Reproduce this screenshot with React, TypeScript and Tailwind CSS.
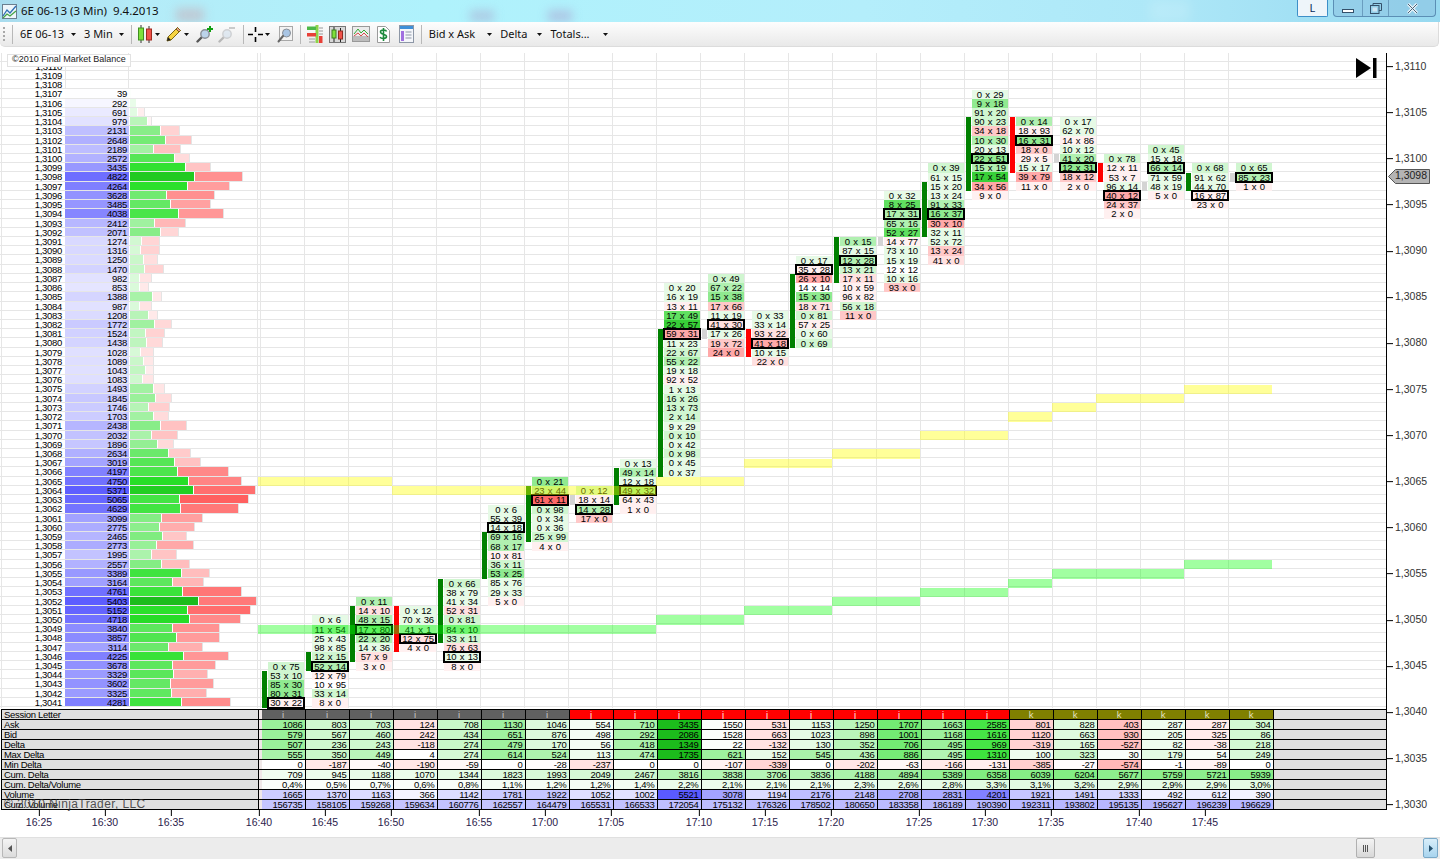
import type React from 'react'

const ROW = 9.227
const TOP_PRICE = 3111
const rowTop = (price: number) => (TOP_PRICE - price) * ROW

// price, volume, end of green bar, end of red bar (measured from the ladder)
const ladder: [number, number, number, number][] = [
  [3107, 39, 392, 392], [3106, 292, 407, 407], [3105, 691, 412, 436], [3104, 979, 442, 457],
  [3103, 2131, 480, 541], [3102, 2648, 495, 577], [3101, 2189, 459, 543], [3100, 2572, 522, 571],
  [3099, 3435, 555, 634], [3098, 4822, 582, 729], [3097, 4264, 561, 691], [3096, 3628, 498, 645],
  [3095, 3485, 510, 634], [3094, 4038, 534, 672], [3093, 2412, 462, 558], [3092, 2071, 480, 536],
  [3091, 1274, 424, 481], [3090, 1316, 421, 481], [3089, 1250, 430, 475], [3088, 1470, 433, 493],
  [3087, 982, 418, 457], [3086, 853, 418, 448], [3085, 1388, 456, 487], [3084, 987, 418, 457],
  [3083, 1208, 444, 475], [3082, 1772, 462, 515], [3081, 1524, 436, 496], [3080, 1438, 439, 491],
  [3079, 1028, 420, 461], [3078, 1089, 430, 463], [3077, 1043, 436, 463], [3076, 1083, 427, 463],
  [3075, 1493, 460, 496], [3074, 1845, 466, 516], [3073, 1746, 445, 511], [3072, 1703, 460, 509],
  [3071, 2438, 480, 562], [3070, 2032, 454, 534], [3069, 1896, 471, 523], [3068, 2634, 504, 574],
  [3067, 3019, 522, 604], [3066, 4197, 531, 688], [3065, 4750, 565, 727], [3064, 5371, 579, 768],
  [3063, 5065, 538, 747], [3062, 4629, 540, 718], [3061, 3099, 483, 610], [3060, 2775, 477, 586],
  [3059, 2465, 486, 562], [3058, 2773, 468, 583], [3057, 1995, 453, 532], [3056, 2557, 483, 571],
  [3055, 3389, 543, 631], [3054, 3164, 516, 613], [3053, 4761, 546, 726], [3052, 5403, 594, 771],
  [3051, 5152, 561, 753], [3050, 4718, 567, 723], [3049, 3840, 516, 660], [3048, 3857, 528, 660],
  [3047, 3114, 504, 610], [3046, 4225, 549, 688], [3045, 3678, 516, 648], [3044, 3329, 519, 624],
  [3043, 3602, 510, 642], [3042, 3325, 513, 621], [3041, 4281, 543, 693],
]

type Column = {
  top: number
  bar: [number, number, 'g' | 'r' | 'x']
  box: number
  cells: [string, number][]
}

const columns: Column[] = [
  { top: 3045, bar: [3044, 3041, 'g'], box: 4, cells: [['0 x 75', 2], ['53 x 10', 2], ['85 x 30', 4], ['80 x 31', 4], ['30 x 22', -1]] },
  { top: 3050, bar: [3046, 3045, 'g'], box: 5, cells: [['0 x 6', 1], ['11 x 54', 3], ['25 x 43', 1], ['98 x 85', 1], ['12 x 15', 2], ['52 x 14', 3], ['12 x 79', -1], ['10 x 95', 0], ['33 x 14', 2], ['8 x 0', -1]] },
  { top: 3052, bar: [3051, 3046, 'g'], box: 3, cells: [['0 x 11', 3], ['14 x 10', -2], ['48 x 15', 3], ['17 x 80', 4], ['22 x 20', 3], ['14 x 36', 1], ['57 x 9', -2], ['3 x 0', -1]] },
  { top: 3051, bar: [3051, 3047, 'r'], box: 3, cells: [['0 x 12', 1], ['70 x 36', 1], ['41 x 1', 2], ['12 x 75', -2], ['4 x 0', -1]] },
  { top: 3054, bar: [3054, 3048, 'g'], box: 8, cells: [['0 x 66', 2], ['38 x 79', 1], ['41 x 34', 1], ['52 x 31', -2], ['0 x 81', 2], ['84 x 10', 3], ['33 x 11', 2], ['76 x 63', -2], ['10 x 13', 1], ['8 x 0', -1]] },
  { top: 3062, bar: [3059, 3055, 'g'], box: 2, cells: [['0 x 6', 1], ['55 x 39', 1], ['14 x 18', 1], ['69 x 16', 3], ['68 x 17', 3], ['10 x 81', -1], ['36 x 11', 2], ['53 x 25', 4], ['85 x 76', 1], ['29 x 33', 1], ['5 x 0', -1]] },
  { top: 3065, bar: [3064, 3059, 'g'], box: 2, cells: [['0 x 21', 4], ['23 x 44', 3], ['61 x 11', -5], ['0 x 98', 2], ['0 x 34', 1], ['0 x 36', 1], ['25 x 99', 2], ['4 x 0', -1]] },
  { top: 3064, bar: [3063, 3063, 'x'], box: 2, cells: [['0 x 12', 2], ['18 x 14', -1], ['14 x 28', 3], ['17 x 0', -3]] },
  { top: 3067, bar: [3066, 3063, 'g'], box: 3, cells: [['0 x 13', 1], ['49 x 14', 3], ['12 x 18', 1], ['49 x 32', 4], ['64 x 43', -1], ['1 x 0', -1]] },
  { top: 3086, bar: [3081, 3066, 'g'], box: 5, cells: [['0 x 20', 1], ['16 x 19', 1], ['13 x 11', -1], ['17 x 49', 5], ['22 x 57', 6], ['59 x 31', -4], ['11 x 23', 1], ['22 x 67', 2], ['55 x 22', 3], ['19 x 18', 1], ['92 x 52', -1], ['1 x 13', 1], ['16 x 26', 2], ['13 x 73', 2], ['2 x 14', 2], ['9 x 29', 1], ['0 x 10', 2], ['0 x 42', 1], ['0 x 98', 2], ['0 x 45', 1], ['0 x 37', 1]] },
  { top: 3087, bar: [3081, 3081, 'x'], box: 5, cells: [['0 x 49', 2], ['67 x 22', 3], ['15 x 38', 4], ['17 x 66', -3], ['11 x 19', 1], ['41 x 30', -2], ['17 x 26', 1], ['19 x 72', -3], ['24 x 0', -4]] },
  { top: 3083, bar: [3081, 3079, 'r'], box: 3, cells: [['0 x 33', 1], ['33 x 14', 1], ['93 x 22', -2], ['41 x 18', -4], ['10 x 15', 1], ['22 x 0', -2]] },
  { top: 3089, bar: [3087, 3080, 'g'], box: 1, cells: [['0 x 17', 1], ['35 x 28', -1], ['26 x 10', -4], ['14 x 14', 0], ['15 x 30', 4], ['18 x 71', -2], ['0 x 81', 2], ['57 x 25', -1], ['0 x 60', 1], ['0 x 69', 2]] },
  { top: 3091, bar: [3091, 3087, 'g'], box: 2, cells: [['0 x 15', 3], ['87 x 15', 1], ['12 x 28', 3], ['13 x 21', 2], ['17 x 11', -2], ['10 x 59', -1], ['96 x 82', -1], ['56 x 18', 2], ['11 x 0', -3]] },
  { top: 3096, bar: [3091, 3091, 'x'], box: 2, cells: [['0 x 32', 1], ['8 x 25', 5], ['17 x 31', 3], ['65 x 16', 3], ['52 x 27', 5], ['14 x 77', -1], ['73 x 10', 1], ['15 x 19', 1], ['12 x 12', 0], ['10 x 16', 1], ['93 x 0', -3]] },
  { top: 3099, bar: [3097, 3092, 'g'], box: 5, cells: [['0 x 39', 2], ['61 x 15', 1], ['15 x 20', 1], ['13 x 24', 1], ['91 x 33', 3], ['16 x 37', 4], ['30 x 10', -4], ['32 x 11', 1], ['52 x 72', 1], ['13 x 24', -3], ['41 x 0', -2]] },
  { top: 3107, bar: [3104, 3097, 'g'], box: 7, cells: [['0 x 29', 1], ['9 x 18', 4], ['91 x 20', 2], ['90 x 23', 2], ['34 x 18', -3], ['10 x 30', 3], ['20 x 13', 1], ['22 x 51', 4], ['15 x 19', 3], ['17 x 54', 6], ['34 x 56', -4], ['9 x 0', -1]] },
  { top: 3104, bar: [3104, 3099, 'r'], box: 2, cells: [['0 x 14', 3], ['18 x 93', -1], ['16 x 31', 4], ['18 x 0', -3], ['29 x 5', -1], ['15 x 17', 1], ['39 x 79', -4], ['11 x 0', -1]] },
  { top: 3104, bar: [3100, 3100, 'x'], box: 5, cells: [['0 x 17', 1], ['62 x 70', 1], ['14 x 86', -1], ['10 x 12', 1], ['41 x 20', 3], ['12 x 31', 4], ['18 x 12', -3], ['2 x 0', -1]] },
  { top: 3100, bar: [3099, 3098, 'r'], box: 4, cells: [['0 x 78', 2], ['12 x 11', -1], ['53 x 7', -1], ['96 x 14', 1], ['40 x 12', -4], ['24 x 37', -3], ['2 x 0', -1]] },
  { top: 3101, bar: [3097, 3097, 'x'], box: 2, cells: [['0 x 45', 2], ['15 x 18', 1], ['66 x 14', 3], ['71 x 59', 1], ['48 x 19', 1], ['5 x 0', -1]] },
  { top: 3099, bar: [3098, 3097, 'g'], box: 3, cells: [['0 x 68', 2], ['91 x 62', 1], ['44 x 70', 1], ['16 x 87', -1], ['23 x 0', -1]] },
  { top: 3099, bar: [3098, 3098, 'x'], box: 1, cells: [['0 x 65', 2], ['85 x 23', 3], ['1 x 0', -1]] },
]

const shadeClass: Record<string, string> = {
  '-5': 'bg-[#ff6868]',
  '-4': 'bg-[#ffa8a8]',
  '-3': 'bg-[#ffc8c8]',
  '-2': 'bg-[#ffe0e0]',
  '-1': 'bg-[#fff0f0]',
  '0': 'bg-white',
  '1': 'bg-[#e6fae6]',
  '2': 'bg-[#d0f6d0]',
  '3': 'bg-[#b0f0b0]',
  '4': 'bg-[#90ea90]',
  '5': 'bg-[#60e060]',
  '6': 'bg-[#38d038]',
}

const barClass = { g: 'bg-[#008000]', r: 'bg-[#ff0000]', x: 'bg-[#d4d4d4]' }

const bands: [number, number, number, 'y' | 'g'][] = [
  [258, 392, 3065, 'y'], [392, 656, 3064, 'y'], [656, 744, 3065, 'y'], [744, 832, 3067, 'y'],
  [832, 920, 3068, 'y'], [920, 1008, 3070, 'y'], [1008, 1052, 3072, 'y'], [1052, 1096, 3073, 'y'],
  [1096, 1184, 3074, 'y'], [1184, 1272, 3075, 'y'],
  [258, 656, 3049, 'g'], [656, 744, 3050, 'g'], [744, 832, 3051, 'g'], [832, 920, 3052, 'g'],
  [920, 1008, 3053, 'g'], [1008, 1052, 3054, 'g'], [1052, 1184, 3055, 'g'], [1184, 1272, 3056, 'g'],
]

const ask = [1086, 803, 703, 124, 708, 1130, 1046, 554, 710, 3435, 1550, 531, 1153, 1250, 1707, 1663, 2585, 801, 828, 403, 287, 287, 304]
const bid = [579, 567, 460, 242, 434, 651, 876, 498, 292, 2086, 1528, 663, 1023, 898, 1001, 1168, 1616, 1120, 663, 930, 205, 325, 86]
const delta = [507, 236, 243, -118, 274, 479, 170, 56, 418, 1349, 22, -132, 130, 352, 706, 495, 969, -319, 165, -527, 82, -38, 218]
const maxDelta = [555, 350, 449, 4, 274, 614, 524, 113, 474, 1735, 621, 152, 545, 436, 886, 495, 1310, 100, 323, 30, 179, 54, 249]
const minDelta = [0, -187, -40, -190, -59, 0, -28, -237, 0, 0, -107, -339, 0, -202, -63, -166, -131, -385, -27, -574, -1, -89, 0]
const cumDelta = [709, 945, 1188, 1070, 1344, 1823, 1993, 2049, 2467, 3816, 3838, 3706, 3836, 4188, 4894, 5389, 6358, 6039, 6204, 5677, 5759, 5721, 5939]
const cumPct = [0.4, 0.5, 0.7, 0.6, 0.8, 1.1, 1.2, 1.2, 1.4, 2.2, 2.1, 2.1, 2.1, 2.3, 2.6, 2.8, 3.3, 3.1, 3.2, 2.9, 2.9, 2.9, 3.0]
const volume = [1665, 1370, 1163, 366, 1142, 1781, 1922, 1052, 1002, 5521, 3078, 1194, 2176, 2148, 2708, 2831, 4201, 1921, 1491, 1333, 492, 612, 390]
const cumVolume = [156735, 158105, 159268, 159634, 160776, 162557, 164479, 165531, 166533, 172054, 175132, 176326, 178502, 180650, 183358, 186189, 190390, 192311, 193802, 195135, 195627, 196239, 196629]

function green(t: number) {
  const v = Math.min(Math.max(t, 0), 1)
  let r: number
  let g: number
  if (v < 0.5) {
    r = 255 - 135 * (v / 0.5)
    g = 255 - 20 * (v / 0.5)
  } else if (v < 0.85) {
    r = 120 - 80 * ((v - 0.5) / 0.35)
    g = 235 - 11 * ((v - 0.5) / 0.35)
  } else {
    r = 40 - 12 * ((v - 0.85) / 0.15)
    g = 224 - 36 * ((v - 0.85) / 0.15)
  }
  return `rgb(${r}, ${g}, ${r})`
}
const pink = (c: number) => `rgb(255, ${c}, ${c})`
const blue = (c: number) => `rgb(${c}, ${c}, 255)`
const volumeBlue = (v: number) => blue(255 - 165 * Math.min(v / 5500, 1))
const deltaColor = (d: number) => (d >= 0 ? green(d / 1349) : pink(238 - Math.abs(d) * 0.09))

type Row = { label: string; values: string[]; colors: string[] }

const tableRows: Row[] = [
  { label: 'Ask', values: ask.map(String), colors: delta.map(deltaColor) },
  { label: 'Bid', values: bid.map(String), colors: delta.map(deltaColor) },
  { label: 'Delta', values: delta.map(String), colors: delta.map(deltaColor) },
  { label: 'Max Delta', values: maxDelta.map(String), colors: maxDelta.map((v) => green(v / 1735)) },
  { label: 'Min Delta', values: minDelta.map(String), colors: minDelta.map((v) => pink(255 + v * 0.124)) },
  { label: 'Cum. Delta', values: cumDelta.map(String), colors: cumDelta.map((v) => green(v / 13500)) },
  {
    label: 'Cum. Delta/Volume',
    values: cumPct.map((v) => `${v.toFixed(1).replace('.', ',')}%`),
    colors: cumPct.map((v) => green(v / 30)),
  },
  { label: 'Volume', values: volume.map(String), colors: volume.map(volumeBlue) },
  { label: 'Cum. Volume', values: cumVolume.map(String), colors: cumVolume.map((v) => blue(255 - v / 2700)) },
]

const timeTicks: [string, number][] = [
  ['16:25', 39], ['16:30', 105], ['16:35', 171], ['16:40', 259], ['16:45', 325], ['16:50', 391],
  ['16:55', 479], ['17:00', 545], ['17:05', 611], ['17:10', 699], ['17:15', 765], ['17:20', 831],
  ['17:25', 919], ['17:30', 985], ['17:35', 1051], ['17:40', 1139], ['17:45', 1205],
]

const axisLabels = ['1,3110', '1,3105', '1,3100', '1,3095', '1,3090', '1,3085', '1,3080', '1,3075', '1,3070', '1,3065', '1,3060', '1,3055', '1,3050', '1,3045', '1,3040', '1,3035', '1,3030']

function Caret() {
  return (
    <svg width="5" height="3" viewBox="0 0 5 3" className="shrink-0">
      <path d="M0 0h5L2.5 3z" fill="#111" />
    </svg>
  )
}

function Sep() {
  return <div className="h-[19px] w-px shrink-0 bg-[#b8b8b8]" />
}

function AppIcon() {
  return (
    <svg width="15" height="15" viewBox="0 0 15 15" className="shrink-0">
      <rect x="0.5" y="0.5" width="14" height="14" fill="#eef6fb" stroke="#6b7f90" />
      <path d="M1 12 5 6l3 3 6-7" fill="none" stroke="#2f6fb5" strokeWidth="1.3" />
      <path d="M1 14 5 10l3 2 6-5" fill="none" stroke="#46a546" strokeWidth="1.3" />
    </svg>
  )
}

function CandlesIcon() {
  return (
    <svg width="16" height="18" viewBox="0 0 16 18" className="shrink-0">
      <path d="M4 0v18M12 1v17" stroke="#333" />
      <rect x="1.5" y="3" width="5" height="12" fill="#7ee03a" stroke="#3f8f20" />
      <rect x="9.5" y="4" width="5" height="11" fill="#f0524a" stroke="#a02a20" />
    </svg>
  )
}

function PencilIcon() {
  return (
    <svg width="16" height="16" viewBox="0 0 16 16" className="shrink-0">
      <path d="M11.5 1.5 14.5 4.5 5 14l-4 1 1-4z" fill="#f7d443" stroke="#7d6512" />
      <path d="M1 15l1-4 3 3z" fill="#222" />
      <path d="M11.5 1.5 14.5 4.5 13 6 10 3z" fill="#e89a8a" stroke="#7d6512" />
    </svg>
  )
}

function ZoomGlass({ plus, faded }: { plus?: boolean; faded?: boolean }) {
  return (
    <svg width="17" height="17" viewBox="0 0 17 17" className={faded ? 'shrink-0 opacity-35' : 'shrink-0'}>
      <path d="M6.5 10.5 1.5 15.5" stroke="#555" strokeWidth="2.4" strokeLinecap="round" />
      <circle cx="9" cy="8" r="4.2" fill="#bcd3ea" stroke="#8a8f96" strokeWidth="1.4" />
      {plus ? <path d="M14 0v6M11 3h6" stroke="#10a010" strokeWidth="2" /> : <path d="M11 2h6" stroke="#777" strokeWidth="2" />}
    </svg>
  )
}

function CrossIcon() {
  return (
    <svg width="15" height="15" viewBox="0 0 15 15" className="shrink-0">
      <path d="M7.5 0v5M7.5 10v5M0 7.5h5M10 7.5h5" stroke="#000" strokeWidth="1.6" />
    </svg>
  )
}

function SearchBoxIcon() {
  return (
    <svg width="16" height="17" viewBox="0 0 16 17" className="shrink-0">
      <rect x="2.5" y="0.5" width="13" height="14" fill="#f3f3f3" stroke="#a8a8a8" />
      <circle cx="9.5" cy="7" r="4" fill="#a9c5e4" stroke="#8a8f96" />
      <path d="M6 10 1.5 15.5" stroke="#666" strokeWidth="2" strokeLinecap="round" />
    </svg>
  )
}

function LadderIcon() {
  return (
    <svg width="17" height="18" viewBox="0 0 17 18" className="shrink-0">
      <rect x="9.5" y="0" width="3" height="18" fill="#8dd34a" />
      <rect x="1" y="1.5" width="9" height="3.5" fill="#4cb848" />
      <rect x="1" y="8" width="9" height="3.5" fill="#e84038" />
      <rect x="13" y="11" width="3.5" height="7" fill="#e84038" />
      <path d="M13 3h4M13 6h4M13 9h4M3 14h6M3 17h6" stroke="#9a9a9a" />
    </svg>
  )
}

function BoxedCandlesIcon() {
  return (
    <svg width="17" height="17" viewBox="0 0 17 17" className="shrink-0">
      <rect x="0.5" y="0.5" width="16" height="16" fill="#d8d8d8" stroke="#777" />
      <path d="M5 1v15M11.5 2v14" stroke="#222" />
      <rect x="3" y="4" width="4" height="8" fill="#7ee03a" stroke="#3f7f20" />
      <rect x="9.5" y="5" width="4" height="8" fill="#f0524a" stroke="#902a20" />
    </svg>
  )
}

function LinesIcon() {
  return (
    <svg width="18" height="16" viewBox="0 0 18 16" className="shrink-0">
      <rect x="0.5" y="0.5" width="17" height="15" fill="#ececec" stroke="#999" />
      <path d="M1 15V10h16v5z" fill="#bdbdbd" />
      <path d="M2 8 6 3l3 4 3-3 4 4" fill="none" stroke="#36a836" />
      <path d="M2 10 6 7l3 3 3-3 4 4" fill="none" stroke="#d84a4a" />
    </svg>
  )
}

function MoneyIcon() {
  return (
    <svg width="13" height="17" viewBox="0 0 13 17" className="shrink-0">
      <path d="M.5.5h8l4 4v12H.5z" fill="#fff" stroke="#9a9a9a" />
      <path d="M9.5 5.5c-.5-2-6-2-6 .5s6 2 6 4.5-5.5 2.5-6.5.5M6.5 2v13" fill="none" stroke="#1c8a3c" strokeWidth="1.6" />
    </svg>
  )
}

function TableDocIcon() {
  return (
    <svg width="15" height="18" viewBox="0 0 15 18" className="shrink-0">
      <rect x="0.5" y="0.5" width="14" height="17" fill="#f4f6fa" stroke="#8d97a6" />
      <rect x="1" y="1" width="13" height="3" fill="#3f8fd8" />
      <rect x="2" y="6" width="3" height="10" fill="#a070e0" />
      <path d="M6.5 7h6M6.5 10h6M6.5 13h6" stroke="#8d97a6" />
    </svg>
  )
}

function TitleBar() {
  return (
    <div className="relative flex h-[22px] shrink-0 items-center overflow-hidden bg-[linear-gradient(90deg,#a9dcee_0%,#b4ecf8_10%,#aff2fc_30%,#b4eefb_60%,#aee8f8_80%,#97d9f0_100%)] pl-[2px] tracking-normal">
      <div className="absolute top-[8px] left-[176px] h-[14px] w-[28px] bg-[#c9a9b4]/50 blur-[5px]" />
      <div className="absolute top-[10px] left-[470px] h-[12px] w-[24px] bg-[#a9a9d0]/50 blur-[5px]" />
      <div className="absolute top-[10px] left-[548px] h-[12px] w-[24px] bg-[#a9a0d0]/50 blur-[5px]" />
      <div className="absolute top-0 left-[1150px] h-[22px] w-[40px] bg-white/15 blur-[6px]" />
      <AppIcon />
      <span className="relative ml-[4px] font-['Noto_Sans',sans-serif] text-[11.5px] whitespace-pre text-[#111]">
        6E 06-13 (3 Min)  9.4.2013
      </span>
      <div className="relative ml-auto flex h-full items-start">
        <div className="flex h-[17px] w-[31px] items-center justify-center rounded-b-[2px] border border-t-0 border-[#3d8fc8] bg-[#eef5fa] font-['Noto_Sans',sans-serif] text-[11px] text-[#0a2a5a]">
          L
        </div>
        <div className="mr-[4px] ml-[5px] flex h-[17px] rounded-b-[4px] border border-t-0 border-[#5b8fb5] bg-[#8ec4e2]/60">
          <div className="flex w-[29px] items-end justify-center border-r border-[#6a9dbf] pb-[3px]">
            <div className="h-[4px] w-[12px] border border-[#34506a] bg-white" />
          </div>
          <div className="flex w-[26px] items-center justify-center border-r border-[#6a9dbf]">
            <svg width="12" height="11" viewBox="0 0 12 11">
              <path d="M3 2.5V.5h8.5v7H9" fill="none" stroke="#34506a" />
              <rect x="0.5" y="2.5" width="8.5" height="8" fill="none" stroke="#34506a" />
              <rect x="2.5" y="4.5" width="4.5" height="4" fill="#cfe6f4" />
            </svg>
          </div>
          <div className="flex w-[46px] items-center justify-center">
            <svg width="11" height="11" viewBox="0 0 11 11">
              <path d="M1 1l9 9M10 1l-9 9" stroke="#e8f2f8" strokeWidth="3" />
              <path d="M1 1l9 9M10 1l-9 9" stroke="#4a6478" strokeWidth="1" />
            </svg>
          </div>
        </div>
      </div>
    </div>
  )
}

function Toolbar() {
  return (
    <div className="mr-[1px] flex h-[25px] shrink-0 items-center rounded-b-[5px] border-r border-b border-[#dcdcdc] bg-[linear-gradient(180deg,#fdfdfd,#e9e9e9)] pl-[3px] font-['Noto_Sans',sans-serif] text-[11px] tracking-normal text-[#111]">
      <div className="flex h-[14px] w-[2px] flex-col justify-between">
        {[0, 1, 2, 3].map((i) => (
          <div key={i} className="h-[2px] w-[2px] bg-[#a8a8a8]" />
        ))}
      </div>
      <div className="ml-[7px]">
        <Sep />
      </div>
      <span className="ml-[7px]">6E 06-13</span>
      <div className="ml-[7px]">
        <Caret />
      </div>
      <span className="ml-[8px]">3 Min</span>
      <div className="ml-[6px]">
        <Caret />
      </div>
      <div className="ml-[7px]">
        <Sep />
      </div>
      <div className="ml-[5px]">
        <CandlesIcon />
      </div>
      <div className="ml-[2px]">
        <Caret />
      </div>
      <div className="ml-[6px]">
        <PencilIcon />
      </div>
      <div className="ml-[2px]">
        <Caret />
      </div>
      <div className="ml-[7px]">
        <ZoomGlass plus />
      </div>
      <div className="ml-[5px]">
        <ZoomGlass faded />
      </div>
      <div className="ml-[8px]">
        <Sep />
      </div>
      <div className="ml-[4px]">
        <CrossIcon />
      </div>
      <div className="ml-[2px]">
        <Caret />
      </div>
      <div className="ml-[7px]">
        <SearchBoxIcon />
      </div>
      <div className="ml-[7px]">
        <Sep />
      </div>
      <div className="ml-[5px]">
        <LadderIcon />
      </div>
      <div className="ml-[6px]">
        <BoxedCandlesIcon />
      </div>
      <div className="ml-[6px]">
        <LinesIcon />
      </div>
      <div className="ml-[7px]">
        <MoneyIcon />
      </div>
      <div className="ml-[9px]">
        <TableDocIcon />
      </div>
      <div className="ml-[7px]">
        <Sep />
      </div>
      <span className="ml-[7px]">Bid x Ask</span>
      <div className="ml-[12px]">
        <Caret />
      </div>
      <span className="ml-[8px]">Delta</span>
      <div className="ml-[10px]">
        <Caret />
      </div>
      <span className="ml-[8px]">Totals...</span>
      <div className="ml-[13px]">
        <Caret />
      </div>
    </div>
  )
}

function Ladder() {
  const rows = [3111, 3110, 3109, 3108]
  return (
    <div className="ml-px flex w-[257px] shrink-0 flex-col border-r border-l border-[#e6e6e6]">
      {rows.map((p) => (
        <div key={p} className="flex h-[9.227px] leading-[9.227px]">
          <div className="w-[63px] pr-[3px] text-right">{p === 3111 ? '' : `1,${p}`}</div>
          <div className="w-[64px] border-x border-[#e6e6e6]" />
        </div>
      ))}
      {ladder.map(([p, vol, gEnd, rEnd]) => {
        const greenW = (gEnd - 390) / 3
        const redW = Math.max((rEnd - gEnd - 2) / 3, 0)
        return (
          <div key={p} className="flex h-[9.227px] pb-px leading-[9.227px]">
            <div className="w-[63px] pr-[3px] text-right">{`1,${p}`}</div>
            <div className="w-[64px] pr-[2px] text-right" style={{ background: volumeBlue(vol) }}>
              {vol}
            </div>
            <div className="ml-px" style={{ width: greenW, background: green(greenW / 68) }} />
            {redW > 0 && (
              <div
                className="ml-[0.5px] border-r border-[#e4e4e4]"
                style={{ width: redW, background: pink(255 - (159 * redW) / 69) }}
              />
            )}
          </div>
        )
      })}
    </div>
  )
}

function FootprintColumn({ col, last }: { col: Column; last: boolean }) {
  const [barTop, barBottom, barType] = col.bar
  return (
    <div className={last ? 'flex h-full w-11 shrink-0' : 'flex h-full w-11 shrink-0 border-r border-[#e6e6e6]'}>
      <div className="w-[7.5px] shrink-0">
        <div
          className={`ml-px w-[5.5px] ${barClass[barType]}`}
          style={{ marginTop: rowTop(barTop), height: (barTop - barBottom + 1) * ROW }}
        />
      </div>
      <div className="w-[36px] shrink-0" style={{ marginTop: rowTop(col.top) }}>
        {col.cells.map(([label, shade], i) => (
          <div
            key={i}
            className={
              i === col.box
                ? `relative z-[1] h-[9.227px] text-center leading-[9.227px] whitespace-pre [word-spacing:1.2px] outline-2 -outline-offset-1 outline-black ${shadeClass[shade]}`
                : `h-[9.227px] text-center leading-[9.227px] whitespace-pre [word-spacing:1.2px] ${shadeClass[shade]}`
            }
          >
            {label}
          </div>
        ))}
      </div>
    </div>
  )
}

function Plot() {
  return (
    <div className="relative flex h-[655.117px] shrink-0">
      <div className="absolute inset-0 flex flex-col">
        {Array.from({ length: 71 }, (_, i) => (
          <div key={i} className="h-[9.227px] shrink-0 border-b border-[#e6e6e6]" />
        ))}
      </div>
      <div className="relative flex h-full">
        <Ladder />
        <div className="w-[2.5px] shrink-0 border-r border-[#e6e6e6]" />
        {columns.map((col, i) => (
          <FootprintColumn key={i} col={col} last={i === columns.length - 1} />
        ))}
      </div>
      {bands.map(([x0, x1, p, kind], i) => (
        <div
          key={i}
          className={kind === 'y' ? 'absolute z-[2] bg-[#ffff00]/40' : 'absolute z-[2] bg-[#00ff00]/37'}
          style={{ left: x0, width: x1 - x0, top: rowTop(p), height: ROW }}
        />
      ))}
      <div className="absolute top-[1px] left-[7px] z-[3] flex h-[13px] w-[124px] items-center border border-[#e2e2e2] bg-white pl-[4px] text-[9px] tracking-normal text-[#222]">
        ©2010 Final Market Balance
      </div>
      <svg width="21" height="20" viewBox="0 0 21 20" className="absolute top-[5px] left-[1356px] z-[3]">
        <path d="M0 0 15 10 0 20z" fill="#000" />
        <rect x="17" y="0" width="3.5" height="20" fill="#000" />
      </svg>
    </div>
  )
}

function TableRow({ row }: { row: Row }) {
  return (
    <div className="flex h-[10px] border-t border-black leading-[9px]">
      <div className="w-[257px] shrink-0 border-r border-black bg-[#e0e0e0] pl-[2px]">{row.label}</div>
      <div className="w-[2.5px] shrink-0 bg-[#f0e8e8]" />
      {row.values.map((v, i) => (
        <div
          key={i}
          className="w-11 shrink-0 border-r border-black pr-[2px] text-right"
          style={{ background: row.colors[i] }}
        >
          {v}
        </div>
      ))}
      <div className="flex-1 bg-[#e0e0e0]" />
    </div>
  )
}

function SessionRow() {
  return (
    <div className="flex h-[10px] border-t border-black leading-[9px]">
      <div className="w-[257px] shrink-0 border-r border-black bg-[#e0e0e0] pl-[2px]">Session Letter</div>
      <div className="w-[2.5px] shrink-0 bg-[#f0e8e8]" />
      {ask.map((_, i) => {
        const cls =
          i < 7
            ? 'bg-[#606060] text-[#c8c8c8]'
            : i < 17
              ? 'bg-[#ff0000] text-[#ffe8e8]'
              : 'bg-[#808000] text-[#e0e0c0]'
        return (
          <div key={i} className={`w-11 shrink-0 border-r border-black text-center ${cls}`}>
            {i < 7 ? 'i' : i < 17 ? 'j' : 'k'}
          </div>
        )
      })}
      <div className="flex-1 bg-[#e0e0e0]" />
    </div>
  )
}

function Table() {
  return (
    <div className="relative mt-[1.3px] ml-px flex flex-col border-b border-l border-black">
      <SessionRow />
      {tableRows.map((row) => (
        <TableRow key={row.label} row={row} />
      ))}
      <div className="absolute top-[88px] left-[2px] text-[12px] leading-[14px] tracking-[0.4px] whitespace-pre text-[#333]/85">
        © 2010 NinjaTrader, LLC
      </div>
    </div>
  )
}

function PriceAxis() {
  return (
    <div className="relative h-[757px] w-[54px] shrink-0 border-l border-black text-[10.5px] tracking-normal text-[#333]">
      {axisLabels.map((label, i) => (
        <div
          key={label}
          className="absolute left-0 flex -translate-y-1/2 items-center"
          style={{ top: 14 + i * 46.135 }}
        >
          <div className="h-px w-[6px] bg-black" />
          <span className="ml-[2px]">{label}</span>
        </div>
      ))}
      <div className="absolute top-[116px] left-px z-[1] flex h-[15px] w-[42px] items-center justify-end pr-[3px]">
        <svg width="42" height="15" viewBox="0 0 42 15" className="absolute top-0 left-0">
          <path d="M.5 7.5 7.5.5h34v14h-34z" fill="#b4b4b4" stroke="#555" />
        </svg>
        <span className="relative text-[#222]">1,3098</span>
      </div>
    </div>
  )
}

function TimeAxis() {
  return (
    <div className="relative h-[27px] shrink-0 text-[10.5px] tracking-normal text-[#2b1b4b]">
      {timeTicks.map(([label, x]) => (
        <div key={label} className="absolute top-0 flex -translate-x-1/2 flex-col items-center" style={{ left: x }}>
          <div className="h-[6px] w-px bg-black" />
          <span className="leading-[12px]">{label}</span>
        </div>
      ))}
    </div>
  )
}

function ScrollButton({ right }: { right?: boolean }) {
  return (
    <div
      className={
        right
          ? 'flex h-[20px] w-[15px] items-center justify-center rounded-[2px] border border-[#7aa9c8] bg-[linear-gradient(180deg,#d8eefa,#a8d4ee)]'
          : 'flex h-[20px] w-[15px] items-center justify-center rounded-[2px] border border-[#b8b8b8] bg-[linear-gradient(180deg,#f4f4f4,#dcdcdc)]'
      }
    >
      <svg width="4" height="7" viewBox="0 0 4 7">
        <path d={right ? 'M0 0l4 3.5L0 7z' : 'M4 0 0 3.5 4 7z'} fill={right ? '#24506e' : '#555'} />
      </svg>
    </div>
  )
}

function Scrollbar() {
  return (
    <div className="flex h-[22px] shrink-0 items-center border-t border-[#e0e0e0] bg-[#ececec] pr-[2px] pl-[2px]">
      <ScrollButton />
      <div className="flex-1" />
      <div className="mr-[48px] flex h-[20px] w-[19px] items-center justify-center gap-px rounded-[2px] border border-[#b0b0b0] bg-[linear-gradient(180deg,#f4f4f4,#d8d8d8)]">
        <div className="h-[7px] w-px bg-[#555]" />
        <div className="h-[7px] w-px bg-[#555]" />
        <div className="h-[7px] w-px bg-[#555]" />
      </div>
      <ScrollButton right />
    </div>
  )
}

export default function App() {
  const pageStyle: React.CSSProperties = { width: 1440, height: 859 }
  return (
    <div
      style={pageStyle}
      className="flex flex-col overflow-hidden bg-white font-['Liberation_Sans',sans-serif] text-[9.5px] tracking-[-0.3px] text-black"
    >
      <TitleBar />
      <Toolbar />
      <div className="h-[5.6px] shrink-0" />
      <div className="flex h-[757.4px] shrink-0">
        <div className="flex w-[1386px] shrink-0 flex-col">
          <Plot />
          <Table />
        </div>
        <PriceAxis />
      </div>
      <TimeAxis />
      <Scrollbar />
    </div>
  )
}
